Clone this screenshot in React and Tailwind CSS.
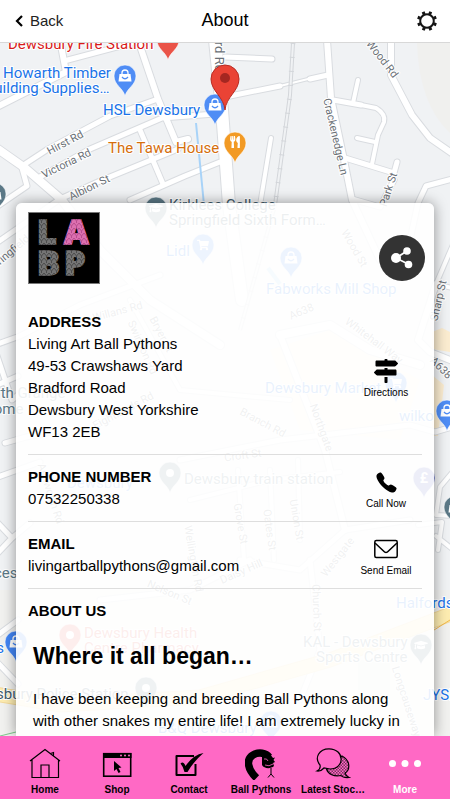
import React from 'react'
import { FaMapSigns, FaShoppingCart, FaUtensils, FaGraduationCap } from 'react-icons/fa'
import { IoCall } from 'react-icons/io5'

const blue = '#1a73e8'
const slate = '#5b7886'

const roads = [
  { d: 'M-5 147 L25 168 L62 200 L100 250 L150 300 L220 345', w: 8 },
  { d: 'M22 166 L48 149 L110 116 L155 100', w: 5 },
  { d: 'M22 168 L27 186 L-5 208', w: 5 },
  { d: 'M38 178 L90 149 L162 118 L215 114', w: 5 },
  { d: 'M-5 244 L60 199 L100 181 L178 149', w: 5 },
  { d: 'M130 200 L185 176 L220 162', w: 5 },
  { d: 'M-5 108 L66 72 L60 40', w: 6 },
  { d: 'M64 61 L155 37', w: 5 },
  { d: 'M138 40 L158 99 L176 142 L188 139', w: 6 },
  { d: 'M140 130 L163 184', w: 5 },
  { d: 'M215 40 L222 110 L229 205 L242 300', w: 12 },
  { d: 'M225 57 L272 59', w: 5 },
  { d: 'M230 96 L280 86', w: 5 },
  { d: 'M280 86 L312 78', w: 2 },
  { d: 'M310 79 L328 75', w: 5 },
  { d: 'M327 40 L331 98 L344 160 L352 200 L380 260', w: 6 },
  { d: 'M333 100 L361 105', w: 5 },
  { d: 'M361 105 L376 108 Q386 114 384 122 L378 135 L372 164', w: 4 },
  { d: 'M353 103 L358 80', w: 4 },
  { d: 'M357 138 L375 142', w: 4 },
  { d: 'M345 158 L394 173 L397 162', w: 5 },
  { d: 'M391 40 L391 75 L412 115 L430 138 L456 156', w: 6 },
  { d: 'M410 240 L418 203 L426 186 L456 178', w: 5 },
  { d: 'M271 138 L260 205', w: 4 },
  { d: 'M352 199 L380 207 L394 180', w: 5 },
  { d: 'M455 240 L436 284 L452 288', w: 4 },
  { d: 'M436 284 L418 340 L430 352 L455 362', w: 6 },
  { d: 'M-5 345 L20 336 L80 305 L160 275', w: 5 },
  { d: 'M-5 350 L12 400 L18 395 M-5 386 L18 376', w: 5 },
  { d: 'M5 443 L26 437 L60 430', w: 5 },
  { d: 'M-5 478 L40 462', w: 5 },
  { d: 'M-5 520 L12 538 L-5 556 M12 538 L30 523', w: 5 },
  { d: 'M-5 637 L18 620 M-5 660 L18 684', w: 5 },
  { d: 'M280 335 L330 325 L370 350 L420 365', w: 8 },
  { d: 'M280 335 L325 450 L345 530', w: 6 },
  { d: 'M180 460 L280 440 L410 425 L435 432 L456 426', w: 5 },
  { d: 'M190 500 L270 480 L340 472', w: 4 },
  { d: 'M238 470 L244 560 M270 470 L274 560 M298 460 L300 540', w: 4 },
  { d: 'M130 300 L180 390 L290 400', w: 4 },
  { d: 'M456 468 L440 487 L436 515 L456 516', w: 4 },
  { d: 'M418 525 L442 522 L438 550 M436 536 L456 552', w: 4 },
  { d: 'M240 560 L300 570 L345 530 L410 520', w: 5 },
  { d: 'M100 600 L190 590 L250 560', w: 5 },
  { d: 'M310 560 L320 650 L300 700', w: 5 },
]

const streets = [
  ['Hirst Rd', 66, 144, -28],
  ['Victoria Rd', 67, 165, -26],
  ['Albion St', 90, 189, -26],
  ['Wood Rd', 381, 60, 52],
  ['Crackenedge Ln', 334, 137, 77],
  ['Park St', 390, 190, -72],
  ['Sharp St', 440, 301, -77],
  ['A638', 440, 369, 45],
  ['Springfield', 9, 255, -40],
  ['Willans Rd', 118, 313, -15],
  ['Bryer St', 160, 335, 62],
  ['Swindon Rd', 141, 348, 66],
  ['Wood St', 353, 249, 60],
  ['A638', 302, 313, -23],
  ['Whitehall Way', 373, 342, 37],
  ['Eightlands Rd', 124, 412, -28],
  ['Branch Rd', 262, 424, 28],
  ['Northgate', 320, 428, 70],
  ['Croft St', 243, 457, -8],
  ['Ashworth Rd', 49, 494, 72],
  ['Grove St', 239, 524, 80],
  ['Oates St', 268, 530, 82],
  ['Union St', 295, 520, 80],
  ['Wellington Rd', 192, 559, 80],
  ['Daisy Hill', 242, 573, -24],
  ['Westgate', 339, 558, -52],
  ['Church St', 315, 608, 88],
  ['Nelson St', 169, 594, 23],
  ['Longcauseway', 405, 702, 72],
]

const places = [
  ['Dewsbury Fire Station', 8, 49, '#d81b1b'],
  ['Howarth Timber', 3, 78, blue],
  ['Building Supplies…', -15, 93, blue],
  ['HSL Dewsbury', 103, 115, blue],
  ['The Tawa House', 108, 153, '#d56e0c'],
  ['Kirklees College', 169, 210, '#3f5b6b'],
  ['Springfield Sixth Form…', 169, 225, '#3f5b6b'],
  ['Lidl', 166, 256, blue],
  ['Fabworks Mill Shop', 266, 294, blue],
  ['Dewsbury Market', 265, 393, blue],
  ['wilko', 399, 421, blue],
  ['North Grange', -24, 398, slate],
  ['Home', -17, 414, slate],
  ['Dewsbury train station', 184, 484, slate],
  ['Services', -39, 578, slate],
  ['Halfords', 396, 608, blue],
  ['Dewsbury Health', 84, 638, '#e05045'],
  ['Centre Pharmacy', 84, 653, '#e05045'],
  ['KAL - Dewsbury', 303, 647, slate],
  ['Sports Centre', 316, 662, slate],
  ['Wickes', -44, 653, blue],
  ['Dewsbury Police Station', -33, 699, '#3f5b6b'],
  ['JYSK', 423, 700, blue],
  ['B&Q Dewsbury', 158, 733, blue],
]

const pins = [
  [125, 76, '#4f8df5', 'bag'],
  [215, 105, '#4f8df5', 'bag'],
  [235, 143, '#f29a24', 'food'],
  [168, 40, '#ea5448', ''],
  [156, 208, slate, 'cap'],
  [203, 245, '#4f8df5', 'cart'],
  [291, 258, '#4f8df5', 'bag'],
  [396, 383, '#4f8df5', 'cart'],
  [447, 411, '#4f8df5', 'bag'],
  [170, 473, slate, 'dot'],
  [424, 478, '#4a58b8', 'pound'],
  [16, 642, '#4285f4', 'bag'],
  [70, 635, '#ea5448', 'dot'],
  [421, 645, slate, 'cap'],
  [146, 688, slate, 'dot'],
  [271, 722, '#4f8df5', 'bag'],
  [-5, 194, slate, 'bag'],
  [455, 507, slate, 'bag'],
]

const MapPin = ({ x, y, color, kind }) => (
  <g transform={`translate(${x} ${y})`}>
    <path d="M0 20 C-2 12 -11 9 -11 0 A11 11 0 0 1 11 0 C11 9 2 12 0 20Z" fill={color} stroke="#fff" strokeWidth="0.6" />
    {kind === 'bag' && (
      <g>
        <path d="M-5.500 -2 H5.500 L6.500 5.500 H-6.500Z" fill="#fff" />
        <path d="M-3 -2 V-3 A3 3 0 0 1 3 -3 V-2" fill="none" stroke="#fff" strokeWidth="1.300" />
        <path d="M-3 1 Q0 4.500 3 1" fill="none" stroke={color} strokeWidth="1.300" />
      </g>
    )}
    {kind === 'food' && <FaUtensils x="-6" y="-7" size={12} color="#fff" />}
    {kind === 'cap' && <FaGraduationCap x="-7" y="-7" size={14} color="#fff" />}
    {kind === 'cart' && <FaShoppingCart x="-6" y="-6" size={12} color="#fff" />}
    {kind === 'dot' && <circle r="4" fill="#fff" />}
    {kind === 'pound' && (
      <text y="5" textAnchor="middle" fontSize="14" fontWeight="700" fill="#fff">£</text>
    )}
  </g>
)

const TownMap = () => (
  <svg
    className="absolute inset-0 h-full w-full font-['Roboto',sans-serif]"
    viewBox="0 43 450 693"
    preserveAspectRatio="xMidYMin slice"
    aria-label="Map of Dewsbury"
  >
    <rect y="43" width="450" height="693" fill="#f0f2f4" />
    <path d="M417 43 H450 V133 Q419 104 417 43Z" fill="#f0f0ee" />
    <path d="M0 590 H450 V736 H0Z" fill="#f1f1ef" />
    <path d="M432 332 L442 328 L450 332 V352 L432 349Z M432 375 L444 385 L438 436 H432Z" fill="#fbecd0" />
    <path d="M270 350 L330 330 L420 380 L400 440 L300 430Z" fill="#fdf5e2" />
    <path d="M358 660 H390 V690 H358Z" fill="#e0efe2" />

    <g fill="none" stroke="#d9dce0" strokeLinejoin="round" strokeLinecap="round">
      {roads.map((r) => <path key={r.d} d={r.d} strokeWidth={r.w + 2} />)}
    </g>
    <g fill="none" stroke="#fff" strokeLinejoin="round" strokeLinecap="round">
      {roads.map((r) => <path key={r.d} d={r.d} strokeWidth={r.w} />)}
    </g>

    <g fill="none">
      <path d="M-5 694 L60 705 L200 697 L330 660 L456 612" stroke="#f3d99a" strokeWidth="15" />
      <path d="M-5 694 L60 705 L200 697 L330 660 L456 612" stroke="#fdecb0" strokeWidth="13" />
      <path d="M434 630 L450 620" stroke="#f2b84b" strokeWidth="1" />
      <path d="M0 736 L16 732" stroke="#7cc68c" strokeWidth="1" />
      <path d="M196 123 L204 205" stroke="#a8d3f8" strokeWidth="2" />
      <path d="M268 268 L280 284" stroke="#a8d3f8" strokeWidth="4" />
      <path d="M293 43 L290 95 L275 205 L240 330" stroke="#d3d6da" strokeWidth="4" />
      <path d="M293 43 L290 95 L275 205 L240 330" stroke="#f0f2f4" strokeWidth="2" />
      <path d="M293 43 L290 95 L275 205 L240 330" stroke="#d3d6da" strokeWidth="5" strokeDasharray="1 13" />
    </g>

    <g fontSize="11" fill="#6b7177" stroke="#fff" strokeWidth="2" paintOrder="stroke" textAnchor="middle">
      {streets.map(([name, x, y, angle]) => (
        <text key={name + y} transform={`translate(${x} ${y}) rotate(${angle})`} dy="2">{name}</text>
      ))}
      <text transform="translate(215 72) rotate(90)" fontSize="13" textAnchor="end">Bradford Rd</text>
    </g>
    <g fontSize="15" stroke="#fff" strokeWidth="2" paintOrder="stroke">
      {places.map(([name, x, y, color]) => (
        <text key={name} x={x} y={y} fill={color}>{name}</text>
      ))}
      <text x="67" y="488" fill="#4f8df5">Dewsbury</text>
    </g>

    {pins.map(([x, y, color, kind]) => <MapPin key={`${x}-${y}`} x={x} y={y} color={color} kind={kind} />)}

    <path d="M225 110 C224 97 211 91 211 79 A14 14 0 0 1 239 79 C239 91 226 97 225 110Z" fill="#ea4335" stroke="#b92d24" />
    <circle cx="225" cy="78" r="5" fill="#a52721" />
  </svg>
)

const GearIcon = () => (
  <svg className="h-5 w-5" viewBox="0 0 20 20" fill="none" stroke="#151515">
    <circle cx="10" cy="10" r="6.800" strokeWidth="2" />
    {[22, 67, 112, 157, 202, 247, 292, 337].map((a) => (
      <path key={a} d="M10 0 V3" strokeWidth="3" transform={`rotate(${a} 10 10)`} />
    ))}
  </svg>
)

const Logo = () => (
  <svg className="h-18 w-18 border border-[#777]" viewBox="0 0 70 70" aria-label="LABP">
    <defs>
      <pattern id="grayScales" width="5" height="5" patternUnits="userSpaceOnUse">
        <rect width="5" height="5" fill="#747474" />
        <path d="M0 0 L2.500 3 L5 0 M2.500 3 V5" stroke="#4c4c4c" fill="none" />
      </pattern>
      <pattern id="pinkScales" width="5" height="5" patternUnits="userSpaceOnUse">
        <rect width="5" height="5" fill="#dc70b0" />
        <path d="M0 0 L2.500 3 L5 0 M2.500 3 V5" stroke="#b94d8f" fill="none" />
      </pattern>
    </defs>
    <rect width="70" height="70" fill="#000" />
    <g
      className="font-['Open_Sans',sans-serif]"
      fontSize="34"
      fontWeight="800"
      fill="url(#grayScales)"
      stroke="url(#grayScales)"
      strokeWidth="1.500"
    >
      <text x="8" y="31">L</text>
      <text x="35" y="31" fill="url(#pinkScales)" stroke="url(#pinkScales)">A</text>
      <text x="8" y="62">B</text>
      <text x="35" y="62">P</text>
    </g>
  </svg>
)

const ShareIcon = () => (
  <svg className="h-6 w-6" viewBox="0 0 24 24" fill="#fff" stroke="#fff">
    <path d="M17 5 L6 12 L18 18" fill="none" strokeWidth="1.800" />
    <circle cx="6" cy="12" r="5" stroke="none" />
    <circle cx="17" cy="5" r="3.800" stroke="none" />
    <circle cx="18.500" cy="18.500" r="3.800" stroke="none" />
  </svg>
)

const MailIcon = () => (
  <svg className="h-5 w-6" viewBox="0 0 24 20" fill="none" stroke="#000" strokeWidth="1.500">
    <rect x="0.800" y="1.500" width="22.400" height="17" rx="1.500" />
    <path d="M1 4 L9.500 12 Q12 15 14.500 12 L23 4" />
  </svg>
)

const HomeIcon = () => (
  <svg className="h-8 w-8" viewBox="0 0 32 32" fill="none" stroke="#000" strokeWidth="1.200">
    <path d="M1 13 L16 1.500 L31 13 M3 12 V29.500 H29.500 V12 M12 29 V17 H20 V29 M21.500 5.500 L24.500 4.500 V8" />
  </svg>
)

const ShopIcon = () => (
  <svg className="h-8 w-8" viewBox="0 0 32 32">
    <rect x="2.700" y="5.700" width="27" height="22.500" fill="none" stroke="#000" strokeWidth="1.600" />
    <path d="M2 5 H30.500 V10 H2Z" />
    <g fill="#ff69c5"><circle cx="20" cy="7.500" r="1" /><circle cx="24" cy="7.500" r="1" /><circle cx="28" cy="7.500" r="1" /></g>
    <path d="M13 13 L20.500 19.500 L17.500 20 L19.500 24 L17.500 25 L15.500 21 L13 23Z" />
  </svg>
)

const ContactIcon = () => (
  <svg className="h-8 w-8" viewBox="0 0 32 32">
    <path d="M21 8 H3.500 V27 H22.500 V16" fill="none" stroke="#000" strokeWidth="2" strokeLinejoin="round" />
    <path d="M7.500 15.500 Q10.500 12.500 12.500 18 Q20 7 30.500 5 Q21 13 14.500 24 H11.500 Q10.500 19 7.500 15.500Z" />
  </svg>
)

const SnakeIcon = () => (
  <svg className="h-8 w-8" viewBox="0 0 32 32">
    <path d="M11.500 30 C2 21 1 11 8 7 C14 3.500 21 5 24 9" fill="none" stroke="#000" strokeWidth="7.500" />
    <path d="M17 9 L25 6 L28 10 L30 9.500 L28.500 12 L30 14 L28 15 L29 18 C26 21 19 21 17 17Z" />
    <path d="M19 11 Q22 10 23 13 M20 17 Q24 19 28 16" fill="none" stroke="#ff69c5" strokeWidth="0.800" />
    <path d="M26 20 V26 L23 29.500 M26 26 L29 29.500" fill="none" stroke="#000" />
  </svg>
)

const ChatIcon = () => (
  <svg className="h-8 w-9" viewBox="0 0 36 32" stroke="#000" strokeWidth="1.200">
    <defs>
      <pattern id="dots" width="3" height="3" patternUnits="userSpaceOnUse">
        <rect width="3" height="3" fill="#ff69c5" stroke="none" />
        <path d="M0 0 H1.500 V1.500 H0Z M1.500 1.500 H3 V3 H1.500Z" fill="#7d3060" stroke="none" />
      </pattern>
    </defs>
    <path d="M27 8 C36 13 35 22 30 25 Q31 28 34 29.500 Q28 30 26 27.500 C19 29 13 26 11.500 21Z" fill="url(#dots)" />
    <path d="M5 17 C-1 10 4 0.800 14 0.800 C30 1 30 21 15 21 L9 20 Q6 23.500 2 23 Q6 21 5 17Z" fill="#ff69c5" />
  </svg>
)

const MoreIcon = () => (
  <svg className="h-8 w-8" viewBox="0 0 32 32" fill="#fff">
    <circle cx="3.500" cy="15.500" r="3.500" /><circle cx="16" cy="15.500" r="3.500" /><circle cx="28.500" cy="15.500" r="3.500" />
  </svg>
)

const tabs = [
  { label: 'Home', icon: <HomeIcon /> },
  { label: 'Shop', icon: <ShopIcon /> },
  { label: 'Contact', icon: <ContactIcon /> },
  { label: 'Ball Pythons', icon: <SnakeIcon /> },
  { label: 'Latest Stoc…', icon: <ChatIcon /> },
  { label: 'More', icon: <MoreIcon />, active: true },
]

const InfoSection = ({ title, children, action, icon }) => (
  <section className="flex items-center justify-between border-b border-[#dedede] py-[11px]">
    <div>
      <h2 className="font-bold">{title}</h2>
      {children}
    </div>
    <button type="button" className="flex w-18 flex-col items-center gap-1 pt-1 text-[10px] leading-3">
      <span className="flex h-6 items-center">{icon}</span>
      {action}
    </button>
  </section>
)

const App = () => {
  return (
    <div className="flex h-screen flex-col overflow-hidden bg-white font-['Liberation_Sans',Arial,sans-serif] text-black">
      {/* Header */}
      <header className="grid h-[43px] shrink-0 grid-cols-3 items-center border-b border-[#d8d8d8] px-3">
        <button type="button" className="flex items-center gap-1 justify-self-start pl-0.5 text-[15px] text-[#222]">
          <svg className="h-3 w-3" viewBox="0 0 12 12" fill="none" stroke="#000" strokeWidth="2.200">
            <path d="M8 1 L3 6 L8 11" />
          </svg>
          Back
        </button>
        <h1 className="justify-self-center pb-0.5 text-lg leading-6">About</h1>
        <button type="button" aria-label="Settings" className="justify-self-end pr-px">
          <GearIcon />
        </button>
      </header>

      {/* Map with the details card on top */}
      <main className="relative flex min-h-0 flex-1 flex-col overflow-hidden px-4 pt-40">
        <TownMap />
        <div className="relative min-h-0 flex-1 overflow-hidden rounded-t-md bg-white/90 px-3 pt-[9px] text-[15px] leading-[22px] shadow-[0_0_14px_rgba(0,0,0,0.4)]">
          <div className="flex items-end justify-between pb-4">
            <Logo />
            <button
              type="button"
              aria-label="Share"
              className="-mr-[3px] mb-[3px] flex h-[46px] w-[46px] items-center justify-center rounded-full bg-[#333]"
            >
              <ShareIcon />
            </button>
          </div>

          <InfoSection title="ADDRESS" action="Directions" icon={<FaMapSigns size={24} />}>
            <address className="not-italic">
              Living Art Ball Pythons<br />
              49-53 Crawshaws Yard<br />
              Bradford Road<br />
              Dewsbury West Yorkshire<br />
              WF13 2EB
            </address>
          </InfoSection>
          <InfoSection title="PHONE NUMBER" action="Call Now" icon={<IoCall size={23} />}>
            <p>07532250338</p>
          </InfoSection>
          <InfoSection title="EMAIL" action="Send Email" icon={<MailIcon />}>
            <p>livingartballpythons@gmail.com</p>
          </InfoSection>

          <section className="pt-[11px]">
            <h2 className="font-bold">ABOUT US</h2>
            <div className="px-[5px]">
              <h3 className="pt-5 text-[23px] leading-7 font-bold">Where it all began…</h3>
              <p className="pt-[18px]">
                I have been keeping and breeding Ball Pythons along with other snakes my entire life! I am extremely lucky in
              </p>
            </div>
          </section>
        </div>
      </main>

      {/* Tab bar */}
      <nav className="grid h-16 shrink-0 grid-cols-6 border-b border-white bg-[#ff69c5] px-[9px] pt-3">
        {tabs.map((tab) => (
          <a
            key={tab.label}
            href="#"
            className={`flex flex-col items-center gap-1 text-[10px] leading-3 font-bold whitespace-nowrap ${tab.active ? 'text-white' : ''}`}
          >
            {tab.icon}
            {tab.label}
          </a>
        ))}
      </nav>
    </div>
  )
}

export default App
